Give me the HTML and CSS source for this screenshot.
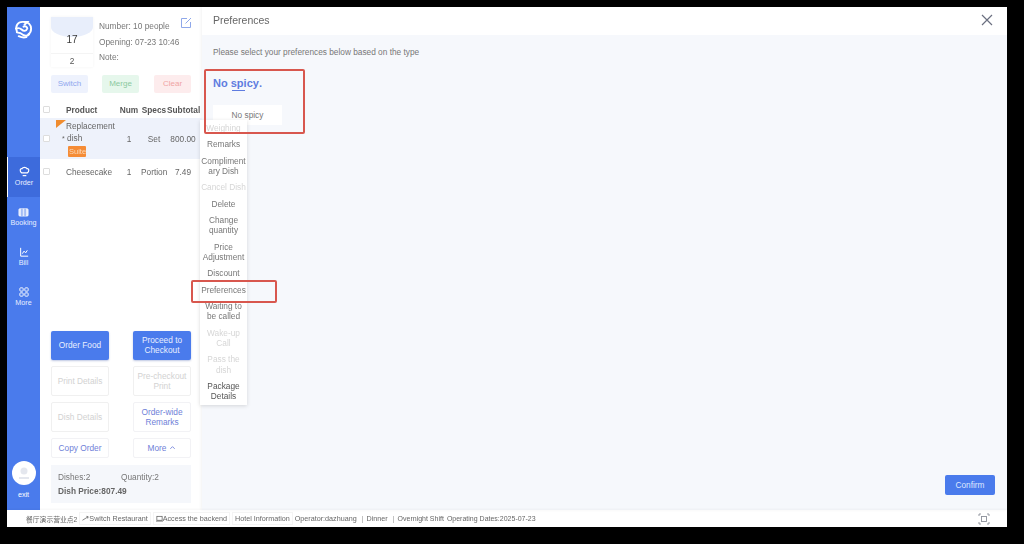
FILE: index.html
```html
<!DOCTYPE html>
<html lang="en">

<head>
    <meta charset="UTF-8">
    <meta name="viewport" content="width=device-width, initial-scale=1.0">
    <title>Preferences</title>
    <link rel="stylesheet" href="styles.css">
</head>

<body>
    <div class="app">
        <div class="main">

            <div class="rail">
                <svg class="logo" viewBox="0 0 20 20" width="19" height="19" fill="none" stroke="#fff" stroke-width="2" stroke-linecap="round">
                    <path d="M3 12C1 6 4 2 9 2h5l-3 3" />
                    <path d="M11 2c4 0 7 3 7 7 0 3-1 5-3 6" />
                    <path d="M2 9c3-1 5 0 6 1 2 2 5 2 6-1 0-2-2-3-4-2" />
                    <path d="M3 13c3 0 5 1 7 3 2 1 4 1 6-1" />
                    <path d="M5 17c2 1 5 2 8 1" />
                </svg>
                <div class="rail-item active">
                    <svg viewBox="0 0 12 12" width="11" height="11" fill="none" stroke="#fff" stroke-width="1.3">
                        <path d="M3 7.5C0.5 6 1 2.5 3.2 3c1-2 4.6-2 5.6 0C11 2.5 11.5 6 9 7.5z" />
                        <path d="M4 10.5h4" />
                    </svg>
                    <span>Order</span>
                </div>
                <div class="rail-item">
                    <svg viewBox="0 0 12 12" width="11" height="11" fill="#dfe7fb" stroke="#fff" stroke-width="0.8">
                        <rect x="1" y="3" width="10" height="8" rx="1" />
                        <path d="M4.3 3v8M7.7 3v8M3 1.2h6" stroke="#4a7bec" />
                    </svg>
                    <span>Booking</span>
                </div>
                <div class="rail-item">
                    <svg viewBox="0 0 12 12" width="10" height="10" fill="none" stroke="#fff" stroke-width="1.2">
                        <path d="M2 1v10h9" />
                        <path d="M4 8l2-3 2 2 2-3" />
                    </svg>
                    <span>Bill</span>
                </div>
                <div class="rail-item">
                    <svg viewBox="0 0 12 12" width="10" height="10" fill="none" stroke="#fff" stroke-width="1.1">
                        <rect x="1" y="1" width="4" height="4" rx="1" />
                        <rect x="7" y="1" width="4" height="4" rx="1" />
                        <rect x="1" y="7" width="4" height="4" rx="1" />
                        <rect x="7" y="7" width="4" height="4" rx="1" />
                    </svg>
                    <span>More</span>
                </div>
                <div class="rail-foot">
                    <div class="avatar">
                        <svg viewBox="0 0 24 24" width="24" height="24" fill="#e4e7ee">
                            <circle cx="12" cy="10" r="3.5" />
                            <path d="M7 16h10v2H7z" />
                        </svg>
                    </div>
                    <span>exit</span>
                </div>
            </div>

            <div class="order">
                <div class="order-top">
                    <div class="table-card">
                        <div class="table-cap"></div>
                        <div class="table-no">17</div>
                        <div class="table-seats">2</div>
                    </div>
                    <div class="table-info">
                        <div>Number: 10 people</div>
                        <div>Opening: 07-23 10:46</div>
                        <div>Note:</div>
                    </div>
                    <svg class="edit-icon" viewBox="0 0 12 12" width="12" height="12" fill="none" stroke="#8fa8ea" stroke-width="1">
                        <path d="M7 1.5H1.5v9h9V5" />
                        <path d="M5.5 6.5L11 1" />
                    </svg>
                </div>

                <div class="tag-row">
                    <div class="tag tag-blue">Switch</div>
                    <div class="tag tag-green">Merge</div>
                    <div class="tag tag-red">Clear</div>
                </div>

                <div class="row row-head">
                    <span class="check"></span>
                    <span class="c-name">Product</span>
                    <span class="c-num">Num</span>
                    <span class="c-spec">Specs</span>
                    <span class="c-sub">Subtotal</span>
                </div>
                <div class="row row-picked">
                    <span class="corner"></span>
                    <span class="check"></span>
                    <span class="c-name">
                        Replacement<br><i class="dot">*</i> dish<br><b class="suite">Suite</b>
                    </span>
                    <span class="c-num">1</span>
                    <span class="c-spec">Set</span>
                    <span class="c-sub">800.00</span>
                </div>
                <div class="row row-plain">
                    <span class="check"></span>
                    <span class="c-name">Cheesecake</span>
                    <span class="c-num">1</span>
                    <span class="c-spec">Portion</span>
                    <span class="c-sub">7.49</span>
                </div>

                <div class="actions">
                    <div class="btn btn-solid h29">Order Food</div>
                    <div class="btn btn-solid h29">Proceed to<br>Checkout</div>
                    <div class="btn btn-off h31">Print Details</div>
                    <div class="btn btn-off h31">Pre-checkout<br>Print</div>
                    <div class="btn btn-off h31">Dish Details</div>
                    <div class="btn btn-link h31">Order-wide<br>Remarks</div>
                    <div class="btn btn-link h20">Copy Order</div>
                    <div class="btn btn-link h20">More
                        <svg viewBox="0 0 8 8" width="7" height="7" fill="none" stroke="#6f7fd8" stroke-width="1">
                            <path d="M1.5 5.5L4 3l2.5 2.5" />
                        </svg>
                    </div>
                </div>

                <div class="summary">
                    <div class="summary-line">
                        <span class="dishes">Dishes:2</span>
                        <span>Quantity:2</span>
                    </div>
                    <div class="summary-price">Dish Price:807.49</div>
                </div>
            </div>

            <div class="pref">
                <div class="pref-head">
                    <span>Preferences</span>
                    <svg viewBox="0 0 12 12" width="12" height="12" fill="none" stroke="#6b7080" stroke-width="1.2">
                        <path d="M1 1l10 10M11 1L1 11" />
                    </svg>
                </div>
                <div class="pref-body">
                    <p class="pref-hint">Please select your preferences below based on the type</p>
                    <div class="pref-title">No <span class="underlined">spicy</span>.</div>
                    <div class="pref-option">No spicy</div>
                    <div class="pref-foot">
                        <div class="confirm">Confirm</div>
                    </div>
                </div>
            </div>
        </div>

        <div class="status">
            <span class="shop">餐厅演示营业点2</span>
            <span class="status-btn">
                <svg viewBox="0 0 8 8" width="7" height="7" fill="none" stroke="#555" stroke-width="0.8">
                    <path d="M0.5 6L7 2M5 1.5L7 2 6.5 4" />
                </svg>Switch Restaurant
            </span>
            <span class="status-btn">
                <svg viewBox="0 0 8 8" width="7" height="7" fill="none" stroke="#555" stroke-width="0.8">
                    <rect x="1" y="1.5" width="6" height="4.5" />
                    <path d="M0 7h8" />
                </svg>Access the backend
            </span>
            <span class="status-btn">Hotel Information</span>
            <span>Operator:dazhuang</span>
            <span class="sep">Dinner</span>
            <span class="sep tight">Overnight Shift</span>
            <span class="dates tight">Operating Dates:2025-07-23</span>
            <svg class="scan" viewBox="0 0 12 12" width="12" height="12" fill="none" stroke="#8a8f99" stroke-width="0.9">
                <path d="M1 3V1h2M9 1h2v2M11 9v2H9M3 11H1V9" />
                <rect x="3.5" y="3.5" width="5" height="5" />
            </svg>
        </div>

        <!-- floating menu from the More button -->
        <div class="menu">
            <div class="off">Weighing</div>
            <div>Remarks</div>
            <div>Compliment<br>ary Dish</div>
            <div class="off">Cancel Dish</div>
            <div>Delete</div>
            <div>Change<br>quantity</div>
            <div>Price<br>Adjustment</div>
            <div>Discount</div>
            <div>Preferences</div>
            <div>Waiting to<br>be called</div>
            <div class="off">Wake-up<br>Call</div>
            <div class="off">Pass the<br>dish</div>
            <div class="dark">Package<br>Details</div>
        </div>

        <!-- red callouts on top of the screenshot -->
        <div class="callout callout-option"></div>
        <div class="callout callout-menu"></div>
    </div>
</body>

</html>
```

FILE: styles.css
```css
* {
    box-sizing: border-box;
}

body {
    margin: 0;
    padding: 7px 17px 17px 7px;
    background: #000;
    font-family: 'Liberation Sans', Arial, sans-serif;
    font-size: 8.3px;
    color: #666;
}

.app {
    position: relative;
    width: 1000px;
    height: 520px;
    background: #fff;
    display: flex;
    flex-direction: column;
    filter: blur(0.5px);
}

.main {
    flex: 1;
    display: flex;
    min-height: 0;
}

/* left rail */
.rail {
    width: 33px;
    background: #4a7bec;
    color: #fff;
    font-size: 7.2px;
    display: flex;
    flex-direction: column;
    align-items: center;
}

.logo {
    margin-top: 13px;
    margin-bottom: 118px;
}

.rail-item {
    width: 100%;
    height: 40px;
    padding-bottom: 1px;
    display: flex;
    flex-direction: column;
    align-items: center;
    justify-content: center;
    gap: 1px;
}

.rail-item span {
    line-height: 9px;
    color: #e8eeff;
}

.rail-item.active {
    background: #3d6bdc;
    border-left: 1px solid #fff;
}

.rail-foot {
    margin-top: auto;
    margin-bottom: 11px;
    display: flex;
    flex-direction: column;
    align-items: center;
    gap: 5px;
}

.avatar {
    width: 24px;
    height: 24px;
    border-radius: 50%;
    background: #fff;
}

.avatar svg {
    display: block;
}

/* order panel */
.order {
    width: 162px;
    padding-top: 10px;
    display: flex;
    flex-direction: column;
    background: #fff;
}

.order-top {
    position: relative;
    margin-left: 11px;
    display: flex;
    gap: 6px;
    height: 58px;
}

.table-card {
    width: 42px;
    height: 50px;
    text-align: center;
    box-shadow: 0 0 3px rgba(0, 0, 0, 0.05);
}

.table-cap {
    height: 20px;
    background: #e8eefb;
    border-radius: 0 0 50% 50%;
}

.table-no {
    height: 14px;
    margin-top: -4px;
    line-height: 14px;
    font-size: 10px;
    color: #3a3a3a;
}

.table-seats {
    height: 14px;
    margin-top: 6px;
    line-height: 14px;
    border-top: 1px solid #f4f4f4;
    color: #555;
}

.table-info {
    padding-top: 3px;
    color: #777;
}

.table-info div {
    height: 15.5px;
    line-height: 13px;
}

.edit-icon {
    position: absolute;
    top: 0;
    left: 129px;
}

.tag-row {
    margin-left: 11px;
    width: 140px;
    display: flex;
    gap: 14px;
}

.tag {
    width: 37px;
    height: 18px;
    line-height: 18px;
    text-align: center;
    font-size: 8px;
    border-radius: 2px;
}

.tag-blue {
    background: #eef2fd;
    color: #8fa8ee;
}

.tag-green {
    background: #e6f7ec;
    color: #8cc9a0;
}

.tag-red {
    margin-left: 1px;
    background: #fdeced;
    color: #f0a4a4;
}

.row {
    position: relative;
    display: flex;
    align-items: center;
    padding-left: 2px;
}

.row-head {
    margin-top: 8px;
    height: 17px;
    font-weight: bold;
    color: #555;
}

.row-picked {
    height: 41px;
    background: #eef2fb;
}

.row-plain {
    height: 25px;
}

.check {
    width: 7px;
    height: 7px;
    margin-left: 1px;
    border: 1px solid #ddd;
    border-radius: 1px;
    background: #fff;
}

.c-name {
    width: 51px;
    margin-left: 16px;
    line-height: 12px;
    flex-shrink: 0;
}

.c-num {
    width: 24px;
    text-align: center;
}

.c-spec {
    width: 26px;
    text-align: center;
}

.c-sub {
    width: 32px;
    text-align: center;
    white-space: nowrap;
}

.corner {
    position: absolute;
    top: 2px;
    left: 16px;
    border-style: solid;
    border-width: 8px 10px 0 0;
    border-color: #f08c2e transparent transparent transparent;
}

.dot {
    font-style: normal;
    font-size: 7px;
    margin-left: -4px;
}

.suite {
    display: inline-block;
    padding: 0 1px;
    width: 18px;
    height: 11px;
    line-height: 11px;
    margin-left: 2px;
    background: #f58c36;
    color: #fbd9b8;
    font-size: 7.5px;
    font-weight: normal;
    border-radius: 1px;
}

.actions {
    margin: auto 0 0 11px;
    width: 140px;
    display: grid;
    grid-template-columns: 58px 58px;
    column-gap: 24px;
    row-gap: 6px;
}

.btn {
    display: flex;
    align-items: center;
    justify-content: center;
    gap: 3px;
    padding-bottom: 1px;
    text-align: center;
    line-height: 10px;
    border-radius: 2px;
}

.h29 {
    height: 29px;
}

.h31 {
    height: 30px;
}

.h20 {
    height: 20px;
}

.btn-solid {
    background: #4a7bec;
    color: #e9efff;
    box-shadow: 0 1px 2px rgba(40, 70, 160, 0.3);
}

.btn-off {
    border: 1px solid #f0f0f0;
    color: #d2d2d2;
}

.btn-link {
    border: 1px solid #f2f2f5;
    color: #6f7fd8;
}

.summary {
    margin: 7px 0 7px 11px;
    width: 140px;
    height: 38px;
    padding: 7px 7px 0;
    background: #f5f7fb;
}

.summary-line {
    display: flex;
    line-height: 10px;
    color: #777;
}

.dishes {
    width: 63px;
}

.summary-price {
    margin-top: 4px;
    line-height: 10px;
    font-weight: bold;
    color: #666;
}

/* preferences panel */
.pref {
    flex: 1;
    display: flex;
    flex-direction: column;
    box-shadow: -1px 0 3px rgba(0, 0, 0, 0.05);
}

.pref-head {
    height: 28px;
    padding: 0 14px 2px 11px;
    display: flex;
    align-items: center;
    justify-content: space-between;
    font-size: 10.5px;
    color: #666;
}

.pref-body {
    flex: 1;
    display: flex;
    flex-direction: column;
    padding: 0 12px 15px 11px;
    background: #f6f8fc;
}

.pref-hint {
    margin: 12px 0 0;
    font-size: 8.3px;
    line-height: 11px;
    color: #777;
}

.pref-title {
    margin-top: 18px;
    font-size: 11px;
    line-height: 14px;
    font-weight: bold;
    color: #5f7ce0;
}

.underlined {
    position: relative;
    display: inline-block;
}

.underlined::after {
    content: "";
    position: absolute;
    left: 1px;
    top: 14px;
    width: 13px;
    height: 1px;
    background: #5f7ce0;
}

.pref-option {
    margin-top: 15px;
    width: 69px;
    height: 20px;
    line-height: 20px;
    text-align: center;
    background: #fff;
    color: #777;
}

.pref-foot {
    margin-top: auto;
    display: flex;
    justify-content: flex-end;
}

.confirm {
    width: 50px;
    height: 20px;
    line-height: 20px;
    text-align: center;
    background: #4a7bec;
    color: #dfe8ff;
    border-radius: 2px;
}

/* bottom bar */
.status {
    position: relative;
    height: 17px;
    padding-left: 19px;
    display: flex;
    align-items: center;
    gap: 2px;
    font-size: 7.2px;
    color: #666;
    white-space: nowrap;
    box-shadow: 0 -1px 2px rgba(0, 0, 0, 0.04);
}

.shop {
    font-family: 'Liberation Sans', 'Noto Sans CJK SC', sans-serif;
    font-size: 6.8px;
}

.status-btn {
    display: inline-flex;
    align-items: center;
    height: 13px;
    padding: 0 2px;
    border: 1px solid #f4f4f4;
}

.sep::before {
    content: "|";
    margin: 0 3px 0 3px;
    color: #999;
}

.tight {
    font-size: 7px;
}

.dates {
    margin-left: 1px;
}

.scan {
    position: absolute;
    right: 17px;
    top: 3px;
}

/* floating menu */
.menu {
    position: absolute;
    left: 193px;
    top: 113px;
    width: 47px;
    background: #fff;
    box-shadow: 0 1px 4px rgba(0, 0, 0, 0.14);
    text-align: center;
    line-height: 10.2px;
    color: #777;
}

.menu div {
    padding: 3.1px 0;
    white-space: nowrap;
}

.menu .off {
    color: #d6d6d6;
}

.menu .dark {
    color: #555;
}

.callout {
    position: absolute;
    border: 2px solid #d8574e;
    border-radius: 2px;
}

.callout-option {
    left: 197px;
    top: 62px;
    width: 101px;
    height: 65px;
}

.callout-menu {
    left: 184px;
    top: 273px;
    width: 86px;
    height: 23px;
}
```
